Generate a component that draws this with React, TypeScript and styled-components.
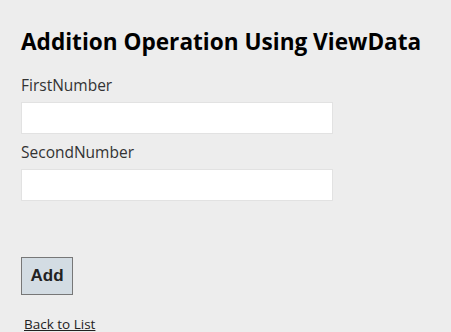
import styled, { createGlobalStyle } from "styled-components"

const GlobalStyle = createGlobalStyle`
  html, body {
    margin: 0;
    padding: 0;
    background: #ededed;
  }
  body {
    font-family: "Open Sans", "Noto Sans", sans-serif;
    color: #222;
  }
`

export default function App() {
  return (
    <>
      <GlobalStyle />
      <Page>
        <Title>Addition Operation Using ViewData</Title>
        <Form>
          <Field>
            <Label htmlFor="first">FirstNumber</Label>
            <Input id="first" type="text" />
          </Field>
          <Field>
            <Label htmlFor="second">SecondNumber</Label>
            <Input id="second" type="text" />
          </Field>
          <AddButton type="button">Add</AddButton>
        </Form>
        <BackLink href="#">Back to List</BackLink>
      </Page>
    </>
  )
}

const Page = styled.div`
  padding: 26px 21px 0;
  display: flex;
  flex-direction: column;
  align-items: flex-start;
`

const Title = styled.h2`
  margin: 0;
  font-size: 22.6px;
  font-weight: 700;
  color: #000;
  line-height: 31px;
`

const Form = styled.form`
  margin-top: 18px;
  display: flex;
  flex-direction: column;
  align-items: flex-start;
`

const Field = styled.div`
  display: flex;
  flex-direction: column;
`

const Label = styled.label`
  font-size: 15.5px;
  font-weight: 500;
  line-height: 20px;
  color: #333;
  margin-bottom: 7px;
`

const Input = styled.input`
  box-sizing: border-box;
  width: 312px;
  height: 32px;
  margin-bottom: 8px;
  background: #fff;
  border: 1px solid #e2e2e2;
  outline: none;
`

const AddButton = styled.button`
  margin-top: 48px;
  box-sizing: border-box;
  width: 52px;
  height: 38px;
  background: #d3dce3;
  border: 1px solid #777;
  font-family: "Liberation Sans", Arial, sans-serif;
  font-size: 17px;
  font-weight: 700;
  color: #222;
  padding: 0;
`

const BackLink = styled.a`
  margin-top: 20px;
  margin-left: 3px;
  font-size: 13.5px;
  line-height: 18px;
  color: #222;
  text-decoration: underline;
`
